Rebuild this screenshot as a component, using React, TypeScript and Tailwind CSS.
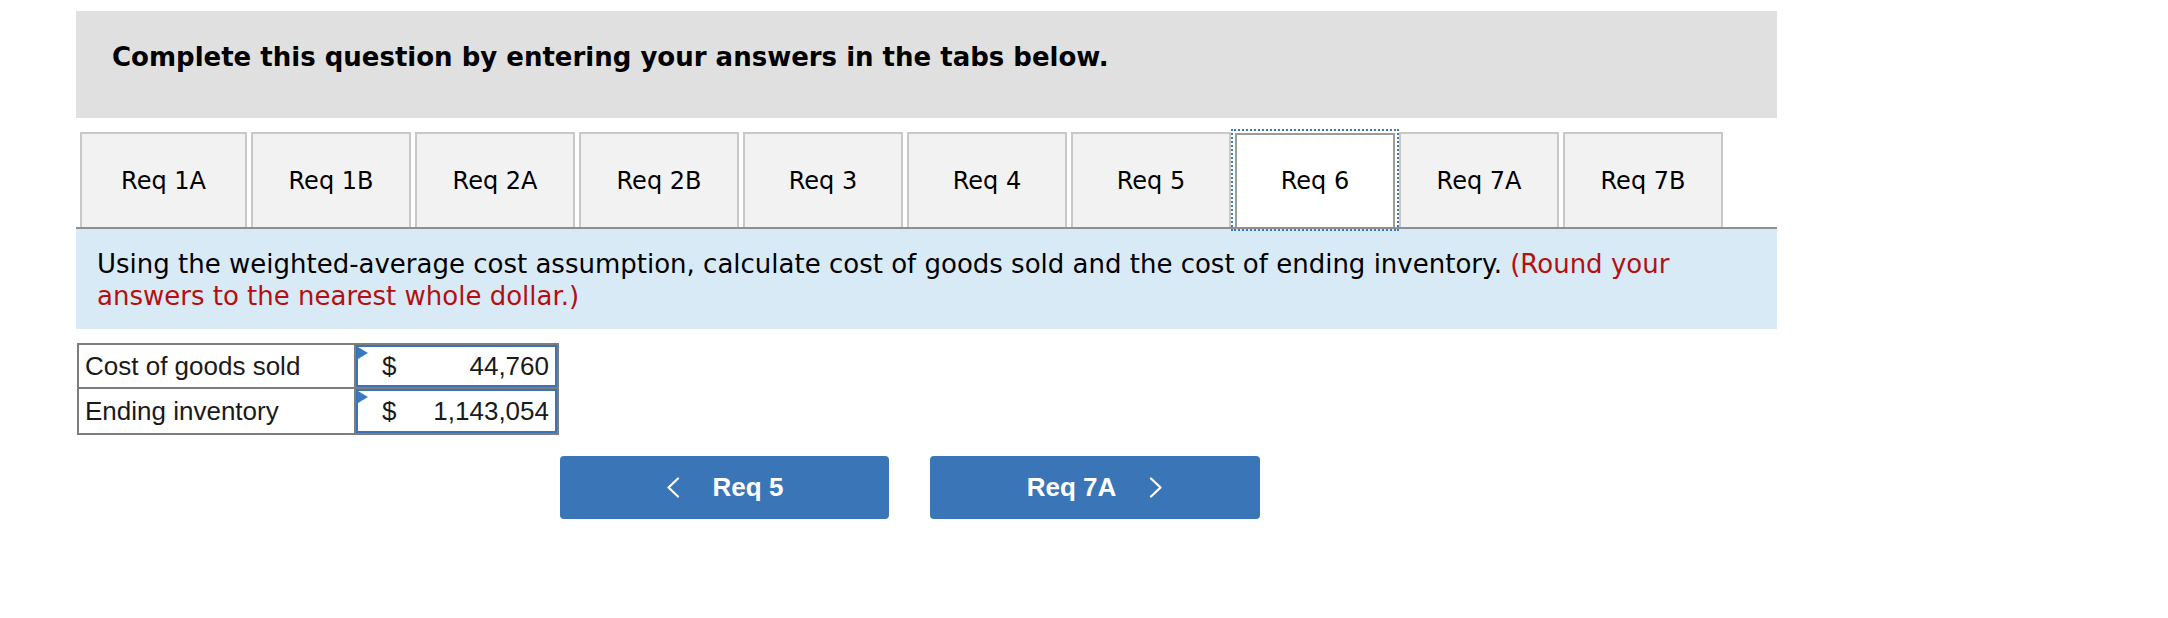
import React from "react"

const tabs = ["Req 1A", "Req 1B", "Req 2A", "Req 2B", "Req 3", "Req 4", "Req 5", "Req 6", "Req 7A", "Req 7B"]

const rows = [
    { label: "Cost of goods sold", value: "44,760" },
    { label: "Ending inventory", value: "1,143,054" },
]

const Chevron = ({ dir }: { dir: "left" | "right" }) => (
    <svg width="14" height="21" viewBox="0 0 14 21" fill="none" stroke="white" strokeWidth="2.2" strokeLinecap="round" strokeLinejoin="round">
        {dir === "left" ? <polyline points="12,1.5 2.5,10.5 12,19.5" /> : <polyline points="2,1.5 11.5,10.5 2,19.5" />}
    </svg>
)

const App = () => {
    return (
        <div className="w-[2168px] h-[618px] bg-white pt-[11px] pl-[76px]">
            <div className="w-[1701px]">
                {/* header */}
                <div className="h-[107px] bg-[#e0e0e0] pl-[36px] pt-[31px]">
                    <h2 className="text-[26px] leading-[30px] font-bold text-black font-['DejaVu_Sans',sans-serif]">
                        Complete this question by entering your answers in the tabs below.
                    </h2>
                </div>

                {/* tabs */}
                <div className="mt-[14px] flex items-end gap-[4px] pl-[4px] border-b-2 border-[#8f8f8f]">
                    {tabs.map((t, i) =>
                        t === "Req 6" ? (
                            <div key={t} className="relative z-10 w-[160px] h-[94px] bg-white border-2 border-b-0 border-[#9c9c9c] outline-2 outline-dotted outline-[#3b78c4] outline-offset-[2px] flex items-center justify-center text-[24px] text-black font-['DejaVu_Sans',sans-serif]">
                                {t}
                            </div>
                        ) : (
                            <div key={t} className={`${i === 0 ? "w-[167px]" : "w-[160px]"} h-[95px] bg-[#f2f2f2] border-2 border-b-0 border-[#c8c8c8] flex items-center justify-center text-[24px] text-black font-['DejaVu_Sans',sans-serif]`}>
                                {t}
                            </div>
                        )
                    )}
                </div>

                {/* question */}
                <div className="h-[100px] bg-[#d9eaf7] px-[21px] pt-[19px]">
                    <p className="text-[26px] leading-[32px] text-black font-['DejaVu_Sans',sans-serif]">
                        Using the weighted-average cost assumption, calculate cost of goods sold and the cost of ending inventory.{" "}
                        <span className="text-[#b50f0f]">(Round your answers to the nearest whole dollar.)</span>
                    </p>
                </div>

                {/* answer table */}
                <div className="mt-[14px] ml-px w-[482px] border-2 border-[#7d7d7d] font-['Liberation_Sans',Arial,sans-serif] text-[26px] text-[#1a1a1a]">
                    {rows.map((r, i) => (
                        <div key={r.label} className={`flex h-[44px] ${i === 0 ? "border-b-2 border-[#7d7d7d]" : ""}`}>
                            <div className="w-[277px] border-r-2 border-[#7d7d7d] flex items-center px-[6px]">{r.label}</div>
                            <div className="relative flex-1 border-2 border-[#3b73b8] flex items-center justify-between pl-[24px] pr-[6px]">
                                <svg className="absolute left-0 top-0" width="10" height="12" viewBox="0 0 10 12">
                                    <polygon points="0,0 10,6 0,12" fill="#3b78c4" />
                                </svg>
                                <span>$</span>
                                <span>{r.value}</span>
                            </div>
                        </div>
                    ))}
                </div>

                {/* nav buttons */}
                <div className="mt-[21px] flex gap-[41px] pl-[484px] font-['Liberation_Sans',Arial,sans-serif]">
                    <button className="w-[329px] h-[63px] rounded-[4px] bg-[#3a76b7] text-white text-[26px] font-bold flex items-center justify-center gap-[33px]">
                        <Chevron dir="left" />
                        <span>Req 5</span>
                    </button>
                    <button className="w-[330px] h-[63px] rounded-[4px] bg-[#3a76b7] text-white text-[26px] font-bold flex items-center justify-center gap-[33px]">
                        <span>Req 7A</span>
                        <Chevron dir="right" />
                    </button>
                </div>
            </div>
        </div>
    )
}

export default App
